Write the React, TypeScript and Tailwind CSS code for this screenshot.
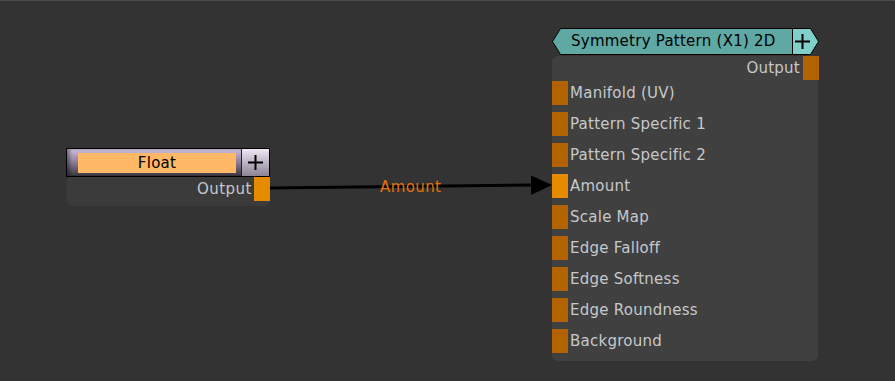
import React from "react";

const inputs = [
  { label: "Manifold (UV)", active: false },
  { label: "Pattern Specific 1", active: false },
  { label: "Pattern Specific 2", active: false },
  { label: "Amount", active: true },
  { label: "Scale Map", active: false },
  { label: "Edge Falloff", active: false },
  { label: "Edge Softness", active: false },
  { label: "Edge Roundness", active: false },
  { label: "Background", active: false },
];

function Plus({ size = 15 }: { size?: number }) {
  return (
    <svg width={size} height={size} viewBox="0 0 15 15">
      <rect x="0" y="6.5" width="15" height="2" fill="#000" />
      <rect x="6.5" y="0" width="2" height="15" fill="#000" />
    </svg>
  );
}

export default function App() {
  return (
    <div
      className="relative w-[895px] h-[381px] overflow-hidden bg-[#333333] border-t border-[#4a4a4a] text-[15px] tracking-[0.25px]"
      style={{ fontFamily: '"DejaVu Sans", Verdana, sans-serif' }}
    >
      {/* Wire */}
      <svg className="absolute left-0 top-[-1px]" width="895" height="381">
        <line x1="268" y1="188" x2="534" y2="185" stroke="#000" strokeWidth="3" />
        <polygon points="531,175.5 552,185 531,195" fill="#000" />
      </svg>
      <div className="absolute left-[380px] top-[176px] leading-[20px] text-[#e8700c] tracking-[0.4px]">
        Amount
      </div>

      {/* Float node */}
      <div className="absolute left-[66px] top-[147px] w-[204px]">
        <div className="flex h-[29px] border border-black">
          <div className="flex items-center w-[174px] pl-[11px] bg-gradient-to-b from-[#d2c0e0] via-[#8a7c96] to-[#3c3842] shadow-[inset_3px_0_3px_rgba(0,0,0,0.35)]">
            <div className="w-[158px] h-[20px] bg-[#ffb866] text-black text-center leading-[20px]">Float</div>
          </div>
          <div className="w-px bg-[#222]" />
          <div className="flex-1 flex items-center justify-center bg-gradient-to-b from-[#f0e6f6] to-[#8c8494]">
            <Plus />
          </div>
        </div>
        <div className="ml-px w-[203px] h-[29px] bg-[#3b3b3b] rounded-b-[6px] rounded-t-[3px] flex justify-end items-start">
          <span className="leading-[24px] text-[#c6c8ca] mr-[2px] tracking-[0.5px]">Output</span>
          <div className="w-[16px] h-[24px] bg-[#e68a00]" />
        </div>
      </div>

      {/* Symmetry Pattern node */}
      <div className="absolute left-[552px] top-[27px] w-[267px]">
        <div className="relative h-[27px]">
          <svg className="absolute left-0 top-0" width="267" height="27">
            <polygon
              points="0.5,13.5 8.5,0.5 258.5,0.5 266.5,13.5 258.5,26.5 8.5,26.5"
              fill="#5fa8a4"
              stroke="#000"
              strokeWidth="1"
            />
            <polygon points="241,1 258,1 265.8,13.5 258,26 241,26" fill="#80cfc8" />
            <line x1="240.5" y1="0.5" x2="240.5" y2="26.5" stroke="#000" strokeWidth="1" />
          </svg>
          <div className="relative flex h-full items-center">
            <span className="ml-[19px] w-[221px] text-black leading-[27px] whitespace-nowrap">Symmetry Pattern (X1) 2D</span>
            <div className="w-[18px] flex justify-center ml-[1px]">
              <Plus />
            </div>
          </div>
        </div>
        <div className="mt-px w-[266px] h-[305px] bg-[#404040] rounded-[6px] flex flex-col">
          <div className="flex justify-end items-start h-[24px] -mr-px">
            <span className="leading-[24px] text-[#c6c8ca] mr-[3px]">Output</span>
            <div className="w-[16px] h-[24px] bg-[#b36200]" />
          </div>
          <div className="mt-px flex flex-col gap-[7px]">
            {inputs.map((r) => (
              <div key={r.label} className="flex items-center h-[24px]">
                <div className={r.active ? "w-[16px] h-[24px] bg-[#e68a00]" : "w-[16px] h-[24px] bg-[#b36200]"} />
                <span className="ml-[2px] leading-[24px] text-[#c6c8ca]">{r.label}</span>
              </div>
            ))}
          </div>
        </div>
      </div>
    </div>
  );
}
